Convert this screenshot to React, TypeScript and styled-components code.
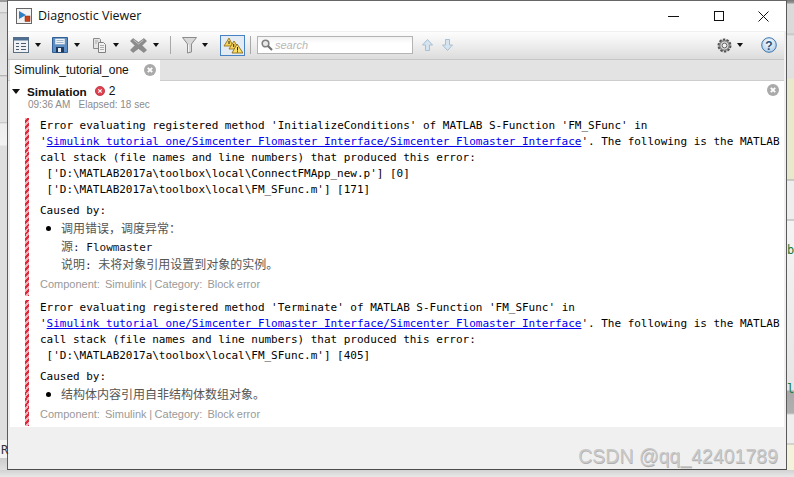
import React from 'react';
import styled, { createGlobalStyle } from 'styled-components';

const GlobalStyle = createGlobalStyle`
  html, body {
    margin: 0;
    padding: 0;
    width: 794px;
    height: 477px;
    overflow: hidden;
    background: #e6e6e6;
  }
  * { box-sizing: border-box; }
`;

const Page = styled.div`
  width: 794px;
  height: 477px;
  display: grid;
  grid-template-columns: 7px 780px 7px;
  grid-template-rows: 470px 7px;
  overflow: hidden;
`;

const LeftStrip = styled.div`
  position: relative;
  background: linear-gradient(
    to bottom,
    #9a9a9a 0, #9a9a9a 2px, #e4e4e4 2px, #e4e4e4 12px, #b8b8b8 12px, #dcdcdc 14px,
    #e4e4e4 75px, #a8a8a8 75px, #e0e0e0 77px, #e0e0e0 122px, #bdbdbd 122px, #ededed 124px,
    #f2f2f2 145px, #dedede 146px, #dedede 440px, #f3f3f3 440px, #f3f3f3 458px, #cccccc 458px, #e0e0e0 470px
  );
`;

const RightStrip = styled.div`
  position: relative;
  background: linear-gradient(
    to bottom,
    #777 0, #999 3px, #dadada 4px, #dadada 33px, #c0c0c0 34px, #e4e4e4 36px, #e0e0e0 78px,
    #e8e8cc 79px, #e8e8cc 179px, #a8a8a8 180px, #eeeeee 181px, #eeeeee 219px, #a8a8a8 220px,
    #f4f4f4 221px, #e6e6e6 390px, #a9a9a9 391px, #b0b0b0 413px, #eeeeee 415px, #eeeeee 443px,
    #b5b5b5 444px, #f3f3dc 445px, #f3f3dc 470px
  );
`;

const BottomStrip = styled.div`
  grid-column: 1 / 4;
  background: linear-gradient(to bottom, #d2d2d2, #e8e8e8);
`;

const StripLetter = styled.span<{ $top: number; $color: string; $left: number }>`
  position: absolute;
  top: ${p => p.$top}px;
  left: ${p => p.$left}px;
  font: 12px/14px 'DejaVu Sans Mono', monospace;
  color: ${p => p.$color};
`;

const Window = styled.div`
  width: 780px;
  height: 470px;
  display: flex;
  flex-direction: column;
  background: #f0f0f0;
  border-top: 1px solid #666;
  border-left: 1px solid #5a5a5a;
  border-right: 1px solid #5a5a5a;
  border-bottom: 1px solid #4c4c4c;
`;

const TitleBar = styled.div`
  height: 30px;
  flex: none;
  background: #fff;
  display: flex;
  align-items: center;
  padding: 0 0 0 8px;
`;

const TitleText = styled.div`
  font: 12.5px 'Open Sans', 'Noto Sans', sans-serif;
  color: #111;
  margin: 0 0 1px 6px;
  flex: 1;
`;

const WindowButton = styled.div`
  width: 45px;
  height: 30px;
  display: flex;
  align-items: center;
  justify-content: center;
`;

const Toolbar = styled.div`
  height: 27px;
  flex: none;
  margin: 1px 2px 0 0;
  padding: 0 0 1px 5px;
  display: flex;
  align-items: center;
  background: linear-gradient(to bottom, #fdfdfd, #f4f4f4 30%, #dcdcdc);
`;

const ToolIcon = styled.span<{ $left?: number }>`
  display: flex;
  align-items: center;
  margin-left: ${p => p.$left ?? 0}px;
  flex: none;
`;

const Caret = styled.span<{ $left?: number }>`
  width: 0;
  height: 0;
  flex: none;
  margin-left: ${p => p.$left ?? 6}px;
  border-left: 3.5px solid transparent;
  border-right: 3.5px solid transparent;
  border-top: 4px solid #111;
`;

const Separator = styled.span<{ $left: number }>`
  width: 1px;
  height: 18px;
  flex: none;
  margin-left: ${p => p.$left}px;
  background: #a8a8a8;
`;

const ToggleButton = styled.span`
  width: 25px;
  height: 21px;
  flex: none;
  margin-left: 12px;
  border: 1px solid #4682c4;
  background: #e4ebf3;
  display: flex;
  align-items: center;
  justify-content: center;
`;

const SearchBox = styled.div`
  width: 156px;
  height: 18px;
  flex: none;
  margin-left: 6px;
  border: 1px solid #b4b4b4;
  background: linear-gradient(to bottom, #f2f2f2, #fff 40%);
  display: flex;
  align-items: center;
  padding-left: 3px;
  gap: 2px;
  font: italic 11px 'Liberation Sans', Arial, sans-serif;
  color: #b8b8b8;
`;

const Spacer = styled.span`
  flex: 1;
`;

const TabStrip = styled.div`
  height: 22px;
  flex: none;
  margin-right: 2px;
  padding-left: 2px;
  display: flex;
  background: #e3e3e3;
  border-top: 1px solid #c6c6c6;
  border-bottom: 1px solid #cdcdcd;
`;

const Tab = styled.div`
  width: 150px;
  height: 21px;
  background: #fff;
  padding: 0 4px 1px 4px;
  display: flex;
  align-items: center;
  justify-content: space-between;
  font: 12px 'Liberation Sans', Arial, sans-serif;
  color: #111;
`;

const Content = styled.div`
  height: 346px;
  flex: none;
  margin: 0 2px 0 2px;
  background: #fff;
  position: relative;
  overflow: hidden;
`;

const GroupHeader = styled.div`
  height: 14px;
  margin-top: 3px;
  padding-left: 2px;
  display: flex;
  align-items: center;
  font: bold 11.7px 'Liberation Sans', Arial, sans-serif;
  color: #111;
`;

const Expander = styled.span`
  width: 0;
  height: 0;
  margin-right: 7px;
  border-left: 4px solid transparent;
  border-right: 4px solid transparent;
  border-top: 5px solid #111;
`;

const ErrorCount = styled.span`
  display: flex;
  align-items: center;
  gap: 4px;
  margin-left: 8px;
  font: 12px 'Liberation Sans', Arial, sans-serif;
`;

const GroupTime = styled.div`
  height: 14px;
  padding-left: 18px;
  font: 10px/14px 'Liberation Sans', Arial, sans-serif;
  color: #8c8c8c;
  white-space: pre;
`;

const CloseAll = styled.span`
  position: absolute;
  top: 3px;
  right: 5px;
  display: flex;
`;

const Message = styled.div<{ $top: number }>`
  margin: ${p => p.$top}px 0 0 15px;
  padding-left: 11px;
  border-left: 4px solid transparent;
  border-image: repeating-linear-gradient(-45deg, #dc2a3c 0, #dc2a3c 2px, #f4b0b8 2px, #f4b0b8 4px) 4;
`;

const MonoLine = styled.div`
  height: 16px;
  font: 11px/16px 'DejaVu Sans Mono', 'Noto Sans CJK SC', monospace;
  letter-spacing: -0.02px;
  color: #000;
  white-space: pre;
`;

const Link = styled.a`
  color: #0000ee;
  text-decoration: underline;
`;

const CausedBy = styled.div`
  height: 16px;
  margin-top: 5px;
  font: 11px/16px 'DejaVu Sans Mono', monospace;
  letter-spacing: -0.02px;
  color: #000;
`;

const Cause = styled.div<{ $bullet?: boolean }>`
  position: relative;
  height: 16px;
  margin-top: 2px;
  padding-left: 21px;
  font: 11px/14px 'DejaVu Sans Mono', 'Noto Sans CJK SC', monospace;
  color: #111;
  white-space: pre;

  &::before {
    content: '';
    display: ${p => (p.$bullet ? 'block' : 'none')};
    position: absolute;
    left: 6px;
    top: 5px;
    width: 5px;
    height: 5px;
    border-radius: 50%;
    background: #000;
  }
`;

const CjkText = styled.span`
  font: 12px/14px 'Noto Sans CJK SC', sans-serif;
  color: #555;
`;

const Meta = styled.div`
  height: 19px;
  margin-top: 4px;
  font: 11px/14px 'Liberation Sans', Arial, sans-serif;
  word-spacing: -0.5px;
  color: #999;
  white-space: pre;
`;

const Footer = styled.div`
  flex: 1;
  display: flex;
  align-items: flex-end;
  justify-content: flex-end;
  padding: 0 8px 1px 0;
  background: #f0f0f0;
`;

const Watermark = styled.div`
  font: 19.5px/24px 'Liberation Sans', Arial, sans-serif;
  color: #c8c8c8;
  text-shadow: 0.5px 0.5px 0 #b0b0b0;
`;

const AppIcon = () => (
  <svg width="16" height="16" viewBox="0 0 16 16">
    <rect x="0.5" y="0.5" width="15" height="15" fill="#f4f4f4" stroke="#666" />
    <path d="M3 3l7 4-7 4z" fill="#2f7fc4" />
    <rect x="9" y="8" width="5" height="5.5" fill="#c8431c" stroke="#7a2a10" strokeWidth="0.5" />
  </svg>
);

const ListIcon = () => (
  <svg width="16" height="16" viewBox="0 0 16 16">
    <rect x="0.5" y="0.5" width="15" height="15" fill="#eef2f6" stroke="#5b6f83" />
    <rect x="0.5" y="0.5" width="15" height="3" fill="#4f6f92" />
    <path d="M3 6.5h3M8 6.5h5M3 9.5h3M8 9.5h5M3 12.5h3M8 12.5h5" stroke="#4a5a6a" strokeWidth="1" />
  </svg>
);

const SaveIcon = () => (
  <svg width="16" height="16" viewBox="0 0 16 16">
    <path d="M0.5 0.5h15v15h-15z" fill="#5d8fc4" stroke="#2e5f96" />
    <rect x="3" y="1.5" width="10" height="6" fill="#eef3f8" stroke="#6f8fb0" strokeWidth="0.5" />
    <path d="M4.5 3.5h7M4.5 5.5h7" stroke="#90a8c0" strokeWidth="0.8" />
    <rect x="4" y="10" width="8" height="5.5" fill="#1d3a5c" />
    <rect x="6" y="11" width="3" height="4" fill="#e8eef4" />
  </svg>
);

const CopyIcon = () => (
  <svg width="15" height="16" viewBox="0 0 15 16">
    <path d="M1.5 1.5h6l1 1v9h-7z" fill="#e4e4e4" stroke="#8a8a8a" />
    <path d="M6.5 5.5h5l2 2v8h-7z" fill="#f2f2f2" stroke="#808080" />
    <path d="M3 4h3M3 6h2M8 8.5h4M8 10.5h4M8 12.5h4" stroke="#9a9a9a" strokeWidth="0.8" />
  </svg>
);

const DeleteIcon = () => (
  <svg width="17" height="16" viewBox="0 0 17 16">
    <path d="M3 1.5l5.5 4 5.5-4 2.5 2.5-4.5 4.5 4.500 4.500-2.500 2.500-5.500-4-5.500 4-2.500-2.500 4.500-4.500-4.500-4.500z" fill="#8c8c8c" stroke="#777" strokeWidth="0.6" />
    <path d="M3.500 3l5 4 5-4" stroke="#c4c4c4" fill="none" />
  </svg>
);

const FunnelIcon = () => (
  <svg width="15" height="18" viewBox="0 0 15 18">
    <path d="M0.500 1.500h14l-5 6.500v8l-4 1v-9z" fill="#d8d8d8" stroke="#8c8c8c" />
    <path d="M6.500 8.500v7.500" stroke="#f4f4f4" />
  </svg>
);

const WarningIcon = () => (
  <svg width="20" height="17" viewBox="0 0 20 17">
    <path d="M6 1L1 9h9z" fill="#f7d358" stroke="#8a6a10" strokeWidth="0.8" />
    <path d="M11 4L6 12h10z" fill="#f7d358" stroke="#8a6a10" strokeWidth="0.8" />
    <path d="M14 7l-5 9h11z" fill="#fbe06a" stroke="#7a5c10" strokeWidth="0.8" />
    <path d="M14.500 10v3.500M14.500 14.300v1M6 4v3M10.700 7v3" stroke="#222" strokeWidth="1" />
  </svg>
);

const SearchIcon = () => (
  <svg width="12" height="12" viewBox="0 0 12 12">
    <circle cx="4.500" cy="4.500" r="3.300" fill="#e8e8e8" stroke="#808080" strokeWidth="1.600" />
    <path d="M7 7l4 4" stroke="#707070" strokeWidth="2.200" />
  </svg>
);

const ArrowIcon = ({ down }: { down?: boolean }) => (
  <svg width="11" height="12" viewBox="0 0 11 12" style={down ? { transform: 'scaleY(-1)' } : undefined}>
    <path d="M5.500 0.500L10.500 6H7.500V11.500H3.500V6H0.500z" fill="#d6e4f0" stroke="#a8bfd4" />
  </svg>
);

const GearIcon = () => (
  <svg width="15" height="15" viewBox="0 0 15 15">
    <circle cx="7.500" cy="7.500" r="6" fill="#c0c0c0" stroke="#555" strokeWidth="2" strokeDasharray="2.400 1.300" />
    <circle cx="7.500" cy="7.500" r="4.700" fill="#d4d4d4" stroke="#666" />
    <circle cx="7.500" cy="7.500" r="2.400" fill="#f2f2f2" stroke="#666" />
  </svg>
);

const HelpIcon = () => (
  <svg width="16" height="16" viewBox="0 0 16 16">
    <defs>
      <radialGradient id="helpFill" cx="50%" cy="35%" r="70%">
        <stop offset="0" stopColor="#ffffff" />
        <stop offset="1" stopColor="#a8c8e4" />
      </radialGradient>
    </defs>
    <circle cx="8" cy="8" r="7.300" fill="url(#helpFill)" stroke="#3f77ad" />
    <text x="8" y="12.500" textAnchor="middle" fontFamily="Liberation Sans" fontWeight="bold" fontSize="12" fill="#24527f">?</text>
  </svg>
);

const GrayClose = ({ size }: { size: number }) => (
  <svg width={size} height={size} viewBox="0 0 12 12">
    <circle cx="6" cy="6" r="6" fill="#aaa" />
    <path d="M3.800 3.800l4.400 4.400M8.200 3.800l-4.400 4.400" stroke="#fff" strokeWidth="1.800" />
  </svg>
);

const RedError = () => (
  <svg width="10" height="10" viewBox="0 0 10 10">
    <circle cx="5" cy="5" r="4.600" fill="#e0414f" stroke="#b02030" strokeWidth="0.700" />
    <path d="M3.300 3.300l3.400 3.400M6.700 3.300l-3.400 3.400" stroke="#fff" strokeWidth="1.200" />
  </svg>
);

const LINK_TEXT = 'Simulink tutorial one/Simcenter Flomaster Interface/Simcenter Flomaster Interface';

const messages = [
  {
    top: 6,
    method: 'InitializeConditions',
    stack: [
      "['D:\\MATLAB2017a\\toolbox\\local\\ConnectFMApp_new.p'] [0]",
      "['D:\\MATLAB2017a\\toolbox\\local\\FM_SFunc.m'] [171]",
    ],
    causes: [
      { cjk: '调用错误，调度异常：', rest: '', bullet: true },
      { cjk: '源', rest: ': Flowmaster' },
      { cjk: '说明', rest: ': ', tail: '未将对象引用设置到对象的实例。' },
    ],
  },
  {
    top: 4,
    method: 'Terminate',
    stack: ["['D:\\MATLAB2017a\\toolbox\\local\\FM_SFunc.m'] [405]"],
    causes: [{ cjk: '结构体内容引用自非结构体数组对象。', rest: '', bullet: true }],
  },
];

export default function App() {
  return (
    <>
      <GlobalStyle />
      <Page>
        <LeftStrip>
          <StripLetter $top={443} $left={1} $color="#333">R</StripLetter>
        </LeftStrip>
        <Window>
          <TitleBar>
            <AppIcon />
            <TitleText>Diagnostic Viewer</TitleText>
            <WindowButton>
              <svg width="11" height="11" viewBox="0 0 11 11"><path d="M0 5.500h11" stroke="#111" /></svg>
            </WindowButton>
            <WindowButton>
              <svg width="10" height="10" viewBox="0 0 10 10"><rect x="0.500" y="0.500" width="9" height="9" fill="none" stroke="#111" /></svg>
            </WindowButton>
            <WindowButton>
              <svg width="11" height="11" viewBox="0 0 11 11"><path d="M0.500 0.500l10 10M10.500 0.500l-10 10" stroke="#111" /></svg>
            </WindowButton>
          </TitleBar>
          <Toolbar>
            <ListIcon />
            <Caret />
            <ToolIcon $left={11}><SaveIcon /></ToolIcon>
            <Caret />
            <ToolIcon $left={12}><CopyIcon /></ToolIcon>
            <Caret />
            <ToolIcon $left={11}><DeleteIcon /></ToolIcon>
            <Caret />
            <Separator $left={11} />
            <ToolIcon $left={11}><FunnelIcon /></ToolIcon>
            <Caret $left={5} />
            <ToggleButton><WarningIcon /></ToggleButton>
            <Separator $left={5} />
            <SearchBox>
              <SearchIcon />
              search
            </SearchBox>
            <ToolIcon $left={9}><ArrowIcon /></ToolIcon>
            <ToolIcon $left={9}><ArrowIcon down /></ToolIcon>
            <Spacer />
            <GearIcon />
            <Caret $left={5} />
            <ToolIcon $left={18}><HelpIcon /></ToolIcon>
            <ToolIcon $left={7} />
          </Toolbar>
          <TabStrip>
            <Tab>
              Simulink_tutorial_one
              <GrayClose size={12} />
            </Tab>
          </TabStrip>
          <Content>
            <CloseAll><GrayClose size={12} /></CloseAll>
            <GroupHeader>
              <Expander />
              Simulation
              <ErrorCount><RedError />2</ErrorCount>
            </GroupHeader>
            <GroupTime>{'09:36 AM   Elapsed: 18 sec'}</GroupTime>
            {messages.map(m => (
              <Message key={m.method} $top={m.top}>
                <MonoLine>Error evaluating registered method '{m.method}' of MATLAB S-Function 'FM_SFunc' in</MonoLine>
                <MonoLine>'<Link>{LINK_TEXT}</Link>'. The following is the MATLAB</MonoLine>
                <MonoLine>call stack (file names and line numbers) that produced this error:</MonoLine>
                {m.stack.map(line => (
                  <MonoLine key={line}> {line}</MonoLine>
                ))}
                <CausedBy>Caused by:</CausedBy>
                {m.causes.map(c => (
                  <Cause key={c.cjk} $bullet={c.bullet}>
                    <CjkText>{c.cjk}</CjkText>
                    {c.rest}
                    {c.tail && <CjkText>{c.tail}</CjkText>}
                  </Cause>
                ))}
                <Meta>{'Component:  Simulink | Category:  Block error'}</Meta>
              </Message>
            ))}
          </Content>
          <Footer>
            <Watermark>CSDN @qq_42401789</Watermark>
          </Footer>
        </Window>
        <RightStrip>
          <StripLetter $top={243} $left={0} $color="#1a7a3a">b</StripLetter>
          <StripLetter $top={382} $left={0} $color="#1a7a3a">l</StripLetter>
        </RightStrip>
        <BottomStrip />
      </Page>
    </>
  );
}
